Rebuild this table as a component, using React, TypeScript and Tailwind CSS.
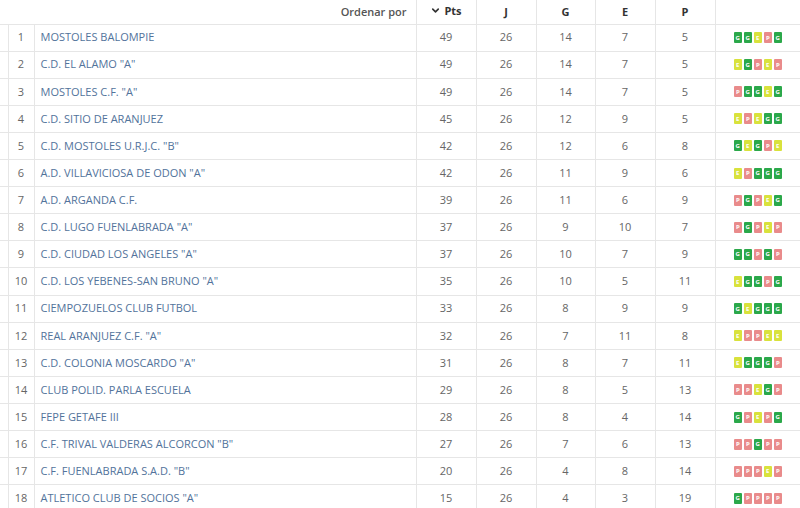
import { ChevronDown } from "lucide-react";

type Row = {
  pos: number;
  team: string;
  pts: number;
  j: number;
  g: number;
  e: number;
  p: number;
  form: string;
};

const rows: Row[] = [
  { pos: 1, team: "MOSTOLES BALOMPIE", pts: 49, j: 26, g: 14, e: 7, p: 5, form: "GGEPG" },
  { pos: 2, team: 'C.D. EL ALAMO "A"', pts: 49, j: 26, g: 14, e: 7, p: 5, form: "EGPEP" },
  { pos: 3, team: 'MOSTOLES C.F. "A"', pts: 49, j: 26, g: 14, e: 7, p: 5, form: "PGGEG" },
  { pos: 4, team: "C.D. SITIO DE ARANJUEZ", pts: 45, j: 26, g: 12, e: 9, p: 5, form: "EPEGG" },
  { pos: 5, team: 'C.D. MOSTOLES U.R.J.C. "B"', pts: 42, j: 26, g: 12, e: 6, p: 8, form: "GEGPE" },
  { pos: 6, team: 'A.D. VILLAVICIOSA DE ODON "A"', pts: 42, j: 26, g: 11, e: 9, p: 6, form: "EPGGG" },
  { pos: 7, team: "A.D. ARGANDA C.F.", pts: 39, j: 26, g: 11, e: 6, p: 9, form: "PGPEG" },
  { pos: 8, team: 'C.D. LUGO FUENLABRADA "A"', pts: 37, j: 26, g: 9, e: 10, p: 7, form: "PGPEP" },
  { pos: 9, team: 'C.D. CIUDAD LOS ANGELES "A"', pts: 37, j: 26, g: 10, e: 7, p: 9, form: "GGPGP" },
  { pos: 10, team: 'C.D. LOS YEBENES-SAN BRUNO "A"', pts: 35, j: 26, g: 10, e: 5, p: 11, form: "EGGPG" },
  { pos: 11, team: "CIEMPOZUELOS CLUB FUTBOL", pts: 33, j: 26, g: 8, e: 9, p: 9, form: "GEGGG" },
  { pos: 12, team: 'REAL ARANJUEZ C.F. "A"', pts: 32, j: 26, g: 7, e: 11, p: 8, form: "EPPEE" },
  { pos: 13, team: 'C.D. COLONIA MOSCARDO "A"', pts: 31, j: 26, g: 8, e: 7, p: 11, form: "EGGGP" },
  { pos: 14, team: "CLUB POLID. PARLA ESCUELA", pts: 29, j: 26, g: 8, e: 5, p: 13, form: "PPEGP" },
  { pos: 15, team: "FEPE GETAFE III", pts: 28, j: 26, g: 8, e: 4, p: 14, form: "GPEPG" },
  { pos: 16, team: 'C.F. TRIVAL VALDERAS ALCORCON "B"', pts: 27, j: 26, g: 7, e: 6, p: 13, form: "PPGPP" },
  { pos: 17, team: 'C.F. FUENLABRADA S.A.D. "B"', pts: 20, j: 26, g: 4, e: 8, p: 14, form: "PPPEP" },
  { pos: 18, team: 'ATLETICO CLUB DE SOCIOS "A"', pts: 15, j: 26, g: 4, e: 3, p: 19, form: "GPPPP" },
];

function FormBadge({ r }: { r: string }) {
  const color =
    r === "G" ? "bg-[#2ba84a]" : r === "E" ? "bg-[#d9e23c]" : "bg-[#e98b8b]";
  return (
    <span
      className={`inline-flex h-[11px] w-[8px] items-center justify-center rounded-[1px] text-[6px] font-bold leading-none text-white ${color}`}
    >
      {r}
    </span>
  );
}

export default function App() {
  const cell = "border border-[#e6e6e6] text-center text-[#666]";
  const head = "border border-t-0 border-[#e6e6e6] font-bold text-[#333]";
  return (
    <div
      className="h-[508px] w-[800px] overflow-hidden bg-white"
      style={{ fontFamily: '"Open Sans", sans-serif' }}
    >
      <table className="w-[800px] table-fixed border-collapse text-[11px]">
        <colgroup>
          <col className="w-[8px]" />
          <col className="w-[26px]" />
          <col className="w-[382px]" />
          <col className="w-[60px]" />
          <col className="w-[60px]" />
          <col className="w-[59px]" />
          <col className="w-[60px]" />
          <col className="w-[60px]" />
          <col className="w-[85px]" />
        </colgroup>
        <thead>
          <tr className="h-[24px]">
            <th
              colSpan={3}
              className="border-b border-[#e6e6e6] pr-[9px] text-right font-semibold text-[#555]"
            >
              Ordenar por
            </th>
            <th className={head}>
              <span className="inline-flex items-center gap-[3px]">
                <ChevronDown size={11} strokeWidth={3.5} />
                Pts
              </span>
            </th>
            <th className={head}>J</th>
            <th className={head}>G</th>
            <th className={head}>E</th>
            <th className={head}>P</th>
            <th className="border border-t-0 border-r-0 border-[#e6e6e6]"></th>
          </tr>
        </thead>
        <tbody>
          {rows.map((row) => (
            <tr key={row.pos} className="h-[27.12px]">
              <td className="border border-l-0 border-[#e6e6e6]"></td>
              <td className={cell}>{row.pos}</td>
              <td className="border border-[#e6e6e6] pl-[6px] text-left text-[#52739b]">
                {row.team}
              </td>
              <td className={cell}>{row.pts}</td>
              <td className={cell}>{row.j}</td>
              <td className={cell}>{row.g}</td>
              <td className={cell}>{row.e}</td>
              <td className={cell}>{row.p}</td>
              <td className="border border-r-0 border-[#e6e6e6] text-center">
                <div className="flex items-center justify-center gap-[2px]">
                  {row.form.split("").map((r, i) => (
                    <FormBadge key={i} r={r} />
                  ))}
                </div>
              </td>
            </tr>
          ))}
        </tbody>
      </table>
    </div>
  );
}
